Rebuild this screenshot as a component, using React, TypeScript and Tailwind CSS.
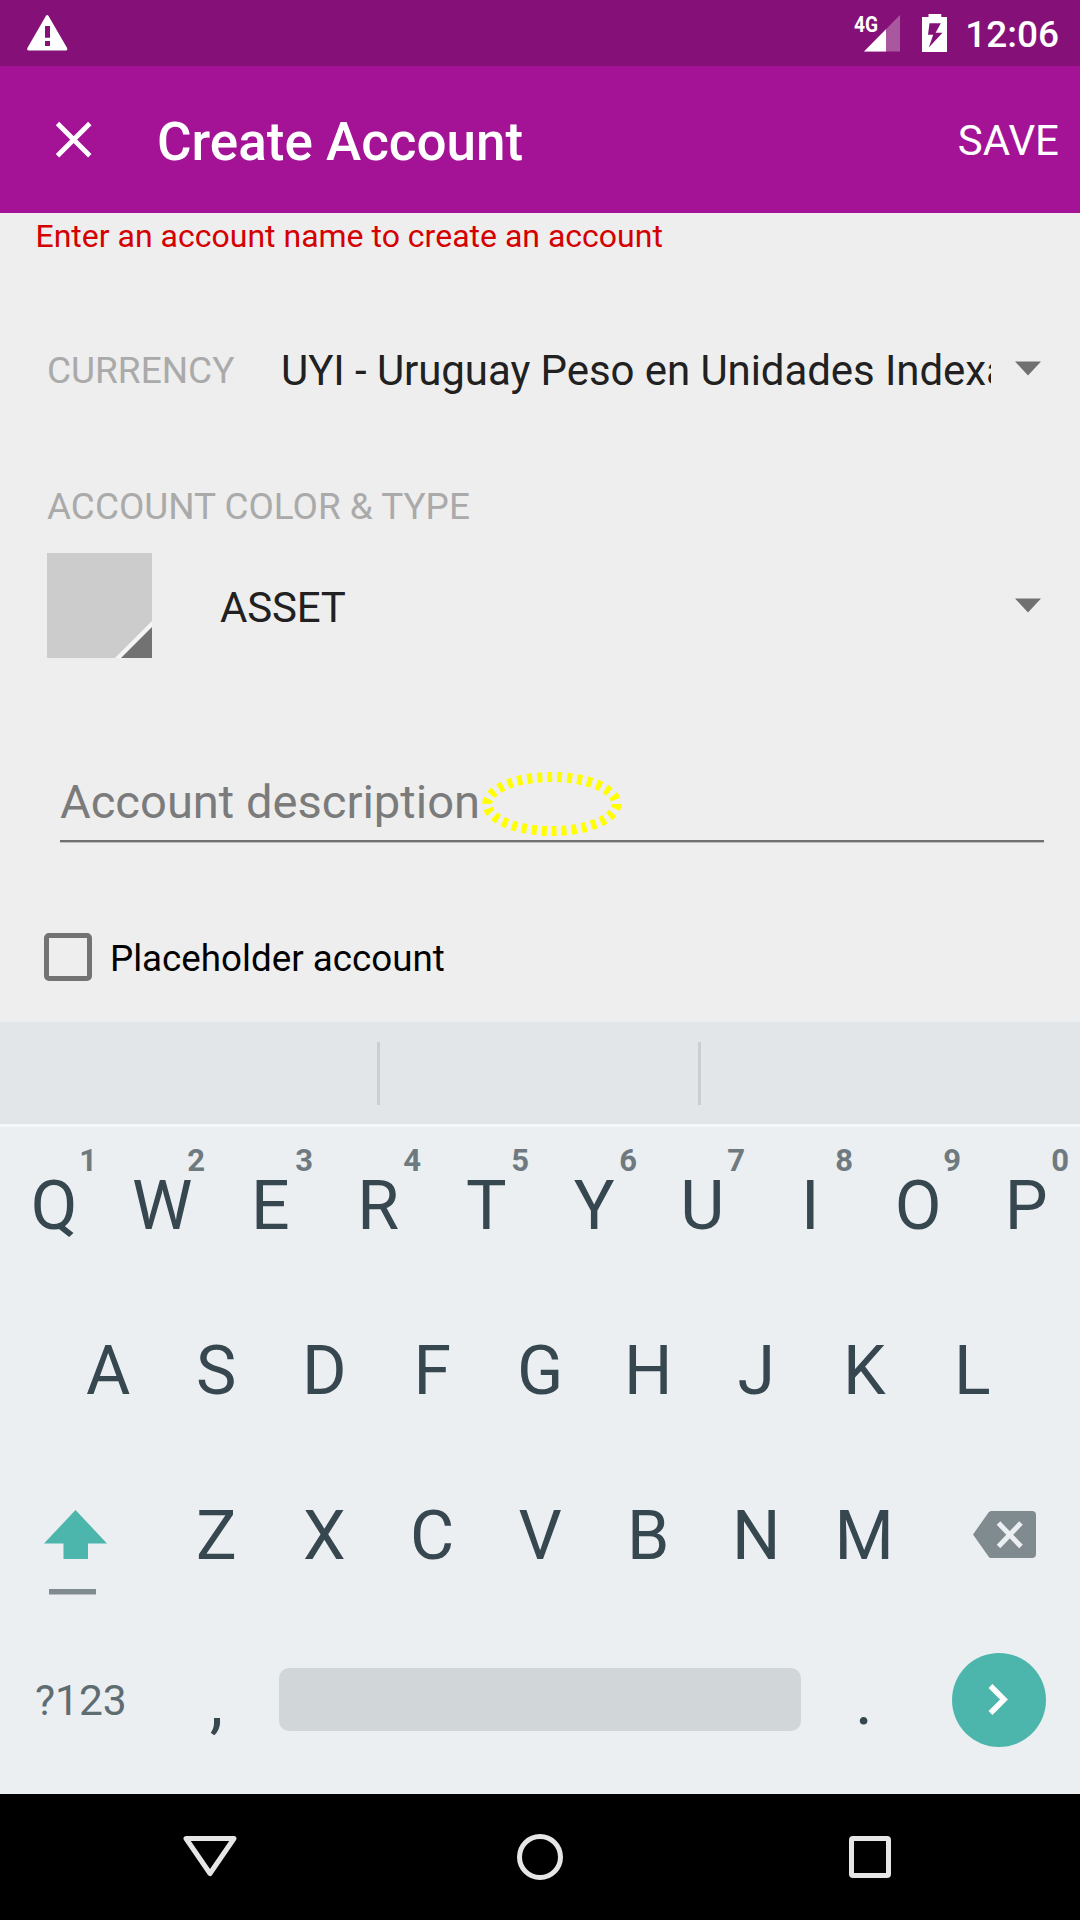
import type { ReactNode } from "react";

const TOP_ROW: [string, string][] = [
  ["Q", "1"], ["W", "2"], ["E", "3"], ["R", "4"], ["T", "5"],
  ["Y", "6"], ["U", "7"], ["I", "8"], ["O", "9"], ["P", "0"],
];

function Key({ label, hint }: { label: string; hint?: string }) {
  return (
    <div className="relative flex h-full w-[108px] items-center justify-center pl-[0.5px] text-[68px]">
      {label}
      {hint && (
        <span className="absolute top-[16px] right-[11px] text-[31px] leading-[36px] font-bold text-[#6f7a80]">
          {hint}
        </span>
      )}
    </div>
  );
}

function KeyRow({ children }: { children: ReactNode }) {
  return <div className="flex h-[158px] items-center justify-center">{children}</div>;
}

function DropArrow() {
  return (
    <svg className="block shrink-0" width="26" height="15" viewBox="0 0 26 15">
      <path d="M0 0.5H26L13 14.5Z" fill="#707070" />
    </svg>
  );
}

function StatusBar() {
  return (
    <div className="flex h-[66px] items-start bg-[#851077] text-white">
      <svg className="mt-[15px] ml-[27px] block" width="41" height="36" viewBox="0 0 41 36">
        <path
          fillRule="evenodd"
          fill="#fff"
          d="M18.7 1.2Q20.2-1 21.7 1.2L40.1 33Q40.8 35.6 38.8 35.6H1.7Q-.4 35.6.4 33ZM18 11V22.8H23V11ZM18 26V31H23V26Z"
        />
      </svg>
      <div className="relative mt-[15px] ml-auto h-[37px] w-[46px]">
        <svg className="absolute top-0 left-[10px] block" width="36" height="37" viewBox="0 0 36 37">
          <path d="M36 0V36.5H0Z" fill="#fff" fillOpacity="0.3" />
          <path d="M22 14.3V36.5H0Z" fill="#fff" />
        </svg>
        <span className="absolute top-[-3.5px] left-0 origin-left scale-x-[0.87] text-[22px] leading-[26px] font-bold">4G</span>
      </div>
      <svg className="mt-[14px] ml-[22px] block" width="25" height="38" viewBox="0 0 25 38">
        <path
          fillRule="evenodd"
          fill="#fff"
          d="M6.5 0H19.3V3H25V38H0V3H6.5ZM7.5 9.2L6 20.8H11.2L6.8 33.4L20.5 18.7H13.6L18.8 9.2Z"
        />
      </svg>
      <span className="mt-[14px] mr-[21px] ml-[18px] text-[37px] leading-[42px] font-medium">12:06</span>
    </div>
  );
}

function Toolbar() {
  return (
    <div className="flex h-[147px] items-center bg-[#a41395] text-white">
      <svg className="ml-[55px] block" width="37" height="37" viewBox="0 0 37 37">
        <path d="M2.5 2.5L34.8 34.8M34.8 2.5L2.5 34.8" stroke="#fff" strokeWidth="4.8" />
      </svg>
      <h1 className="ml-[65px] pt-1 text-[53px] leading-[62px] font-medium">Create Account</h1>
      <button className="mr-[21px] ml-auto pt-[3px] text-[42px] leading-[50px]">SAVE</button>
    </div>
  );
}

function Form() {
  return (
    <div className="flex h-[806px] flex-col bg-[#eeeeee]">
      <p className="pl-[35.5px] text-[32px] leading-[46px] text-[#d50000]">
        Enter an account name to create an account
      </p>

      <div className="mt-[87px] flex h-[50px] items-center pr-[39px] pl-[47px]">
        <span className="w-[234px] text-[37px] leading-[50px] text-[#aaaaaa]">CURRENCY</span>
        <span className="w-[710px] overflow-hidden text-[42px] leading-[50px] tracking-[-0.07px] whitespace-nowrap text-[#212121]">
          UYI - Uruguay Peso en Unidades Indexadas
        </span>
        <div className="mt-[-5px] ml-auto">
          <DropArrow />
        </div>
      </div>

      <div className="mt-[91px] pl-[47px] text-[36.9px] leading-[40px] text-[#aaaaaa]">ACCOUNT COLOR &amp; TYPE</div>
      <div className="mt-[26px] flex h-[105px] items-center pr-[39px] pl-[47px]">
        <svg className="block" width="105" height="105" viewBox="0 0 105 105">
          <path d="M0 0H105V105H0Z" fill="#cccccc" />
          <path d="M105 68V105H68Z" fill="#f5f5f5" />
          <path d="M105 74V105H74Z" fill="#727272" />
        </svg>
        <span className="ml-[68px] pt-[4px] text-[42px] leading-[50px] tracking-[-0.2px] text-[#212121]">ASSET</span>
        <div className="ml-auto">
          <DropArrow />
        </div>
      </div>

      <div className="relative mt-[114px] mr-[36px] ml-[60px] flex h-[70px] items-center border-b-2 border-[#707070] text-[47.1px] leading-[60px] text-[#7b7b7b] shadow-[0_1px_0_0_#bdbdbd]">
        <span className="pb-[9px]">Account description</span>
        <svg className="absolute top-0 left-[422px] block" width="140" height="66" viewBox="0 0 140 66">
          <ellipse cx="69.8" cy="32" rx="64.6" ry="27" fill="none" stroke="#ffff00" strokeWidth="10" strokeDasharray="5 5" />
        </svg>
      </div>

      <label className="mt-[91px] ml-[44px] flex h-[48px] items-center">
        <span className="block h-[48px] w-[48px] rounded-[5px] border-[5px] border-[#737373]" />
        <span className="ml-[18px] pt-[4px] text-[36.75px] leading-[44px] text-black">Placeholder account</span>
      </label>
    </div>
  );
}

function Keyboard() {
  return (
    <div className="h-[775px] bg-[#ebeff2] text-[#37474f]">
      <div className="flex h-[108px] border-t-[3px] border-b-[3px] border-t-[#eceff1] border-b-[#f5f7f8] bg-[#e2e6e9] pt-[20px]">
        <div className="ml-[377px] h-[63px] w-[3px] bg-[#cacfd2]" />
        <div className="ml-[318px] h-[63px] w-[3px] bg-[#cacfd2]" />
      </div>
      <div className="flex flex-col gap-[7px]">
        <KeyRow>
          {TOP_ROW.map(([label, hint]) => (
            <Key key={label} label={label} hint={hint} />
          ))}
        </KeyRow>
        <KeyRow>
          {[..."ASDFGHJKL"].map((c) => (
            <Key key={c} label={c} />
          ))}
        </KeyRow>
        <KeyRow>
          <div className="w-[162px] pt-[34px] pl-[44px]">
            <svg className="block" width="63" height="86" viewBox="0 0 63 86">
              <path d="M31.5 0L63 33.5H44V49H19.5V33.5H0Z" fill="#4db6ac" />
              <path d="M5 79H52V84.5H5Z" fill="#808b90" />
            </svg>
          </div>
          {[..."ZXCVBNM"].map((c) => (
            <Key key={c} label={c} />
          ))}
          <div className="w-[162px] pl-[55px]">
            <svg className="mt-[-3px] block" width="63" height="47" viewBox="0 0 63 47">
              <path d="M18 0H59Q63 0 63 4V43Q63 47 59 47H18Q16.5 47 15.5 45.5L0 23.5L15.5 1.5Q16.5 0 18 0Z" fill="#808b90" />
              <path d="M25.5 12L48 35.5M48 12L25.5 35.5" stroke="#ebeff2" strokeWidth="5" />
            </svg>
          </div>
        </KeyRow>
        <KeyRow>
          <div className="w-[162px] pl-[35px] text-[42.5px] leading-[52px] text-[#5f6c72]">?123</div>
          <div className="w-[108px] pt-px pl-px text-center text-[68px] leading-[80px]">,</div>
          <div className="mt-[-4px] ml-[9px] h-[63px] w-[522px] rounded-[10px] bg-[#d1d6d9]" />
          <div className="ml-[9px] w-[108px] text-center text-[68px] leading-[80px]">.</div>
          <div className="w-[162px] pl-[34px]">
            <svg className="mt-[-2px] block" width="94" height="94" viewBox="0 0 94 94">
              <circle cx="47" cy="47" r="47" fill="#4db6ac" />
              <path d="M38.5 33L52 46.5L38.5 60" fill="none" stroke="#fff" strokeWidth="5.5" />
            </svg>
          </div>
        </KeyRow>
      </div>
    </div>
  );
}

function NavBar() {
  return (
    <div className="flex h-[126px] items-center bg-black pl-[183px]">
      <svg className="block" width="54" height="46" viewBox="0 0 54 46">
        <path d="M3 4.5H51L27 39.5Z" fill="none" stroke="#e6e6e6" strokeWidth="5" strokeLinejoin="round" />
      </svg>
      <svg className="ml-[280px] block" width="46" height="46" viewBox="0 0 46 46">
        <circle cx="23" cy="23" r="20.5" fill="none" stroke="#e6e6e6" strokeWidth="5" />
      </svg>
      <svg className="ml-[286px] block" width="42" height="42" viewBox="0 0 42 42">
        <rect x="2.5" y="2.5" width="37" height="37" rx="1.5" fill="none" stroke="#e6e6e6" strokeWidth="5" />
      </svg>
    </div>
  );
}

export default function App() {
  return (
    <div className="h-[1920px] w-[1080px] overflow-hidden font-['Roboto',sans-serif]">
      <StatusBar />
      <Toolbar />
      <Form />
      <Keyboard />
      <NavBar />
    </div>
  );
}
